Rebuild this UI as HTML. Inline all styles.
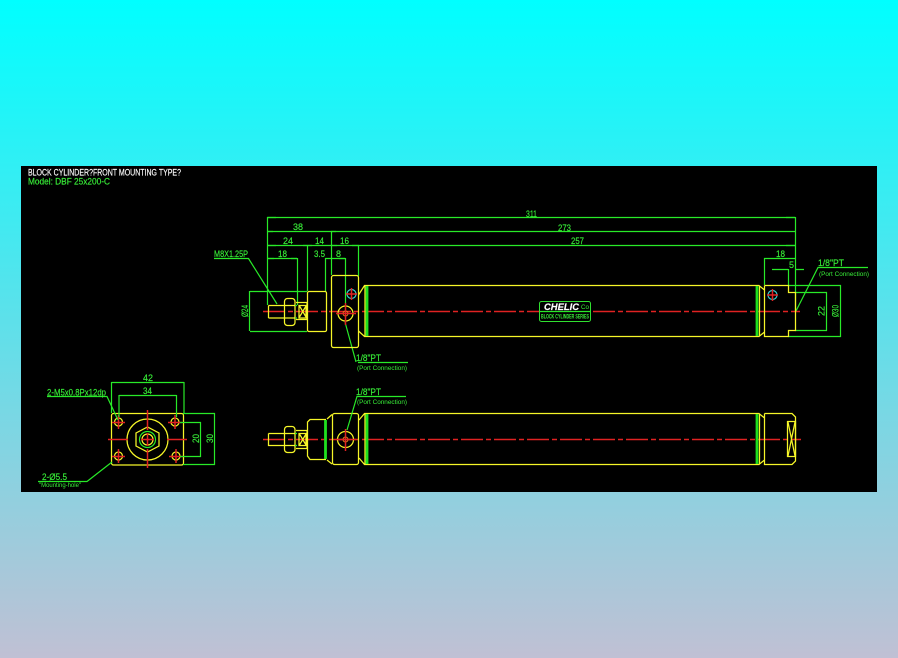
<!DOCTYPE html>
<html><head><meta charset="utf-8"><title>Block Cylinder</title>
<style>
html,body{margin:0;padding:0;width:898px;height:658px;overflow:hidden;background:linear-gradient(180deg,#00ffff 0,#c0c0d4 100%)}
svg{position:absolute;left:0;top:0}
text{font-family:"Liberation Sans",sans-serif;font-size:9px;fill:#38ee38;stroke:#38ee38;stroke-width:.15}
.y{stroke:#f6f628;fill:none;stroke-width:1.25}
.g{stroke:#28ea28;fill:none;stroke-width:1.2}
.b{stroke:#1fe01f;fill:none;stroke-width:2.8}
.r{stroke:#e02222;fill:none;stroke-width:1.5}
.c{stroke:#35d0d0;fill:none;stroke-width:1.2}
.s{font-size:6.5px;stroke-width:0}
</style></head><body>
<svg width="898" height="658" viewBox="0 0 898 658" xmlns="http://www.w3.org/2000/svg">
<rect x="21" y="166" width="856" height="326" fill="#000"/>
<text x="28" y="175.5" style="fill:#fff;stroke:#fff" textLength="153" lengthAdjust="spacingAndGlyphs">BLOCK CYLINDER?FRONT MOUNTING TYPE?</text>
<text x="28" y="184.5" textLength="82" lengthAdjust="spacingAndGlyphs">Model: DBF 25x200-C</text>

<!-- centre lines -->
<path class="r" stroke-dasharray="22 3 5 3" d="M263 311.5H800M263 439.5H801"/>

<!-- dimension lines, top view -->
<path class="g" d="M267.5 217.5H795.5M267.5 231.5H795.5M267.5 245.5H795.5M268 258.5H297M325 258.5H345.5M764 258.5H795M772 269.5H788M795 269.5H804
M267.5 217V305M307.5 245V291M331.5 231V275M358.5 245V276M297.5 258V305M325.5 258V291M345.5 258V304M764.5 258V285M788.5 269V285M795.5 217V311
M214 258.5H248.5L277 304M250 291.5H307M250 331.5H307M249.5 291V331
M796 311L818 267.5H868M358 362.5H408M345 322L356 362
M788 285.5H841M795 292.5H827M795 330.5H827M788 336.5H841M826.5 292V331M840.5 285V337"/>
<path class="g" stroke-width="2" d="M267 217.5h9M786 217.5h9M267 231.5h6M331 231.5h5M267 245.5h9M303 245.5h9M331 245.5h6M352 245.5h7M786 245.5h9M268 258.5h6M291 258.5h6M339 258.5h6"/>
<text x="526" y="217" textLength="11" lengthAdjust="spacingAndGlyphs">311</text>
<text x="558" y="231" textLength="13" lengthAdjust="spacingAndGlyphs">273</text>
<text x="571" y="244" textLength="13" lengthAdjust="spacingAndGlyphs">257</text>
<text x="293" y="230" textLength="10" lengthAdjust="spacingAndGlyphs">38</text>
<text x="283" y="244" textLength="10" lengthAdjust="spacingAndGlyphs">24</text>
<text x="315" y="244" textLength="9" lengthAdjust="spacingAndGlyphs">14</text>
<text x="340" y="244" textLength="9" lengthAdjust="spacingAndGlyphs">16</text>
<text x="278" y="257" textLength="9" lengthAdjust="spacingAndGlyphs">18</text>
<text x="314" y="257" textLength="11" lengthAdjust="spacingAndGlyphs">3.5</text>
<text x="336" y="257">8</text>
<text x="214" y="257" textLength="34" lengthAdjust="spacingAndGlyphs">M8X1.25P</text>
<text x="776" y="257" textLength="9" lengthAdjust="spacingAndGlyphs">18</text>
<text x="789" y="268">5</text>
<text x="818" y="266" textLength="26" lengthAdjust="spacingAndGlyphs">1/8"PT</text>
<text class="s" x="819" y="276" textLength="50" lengthAdjust="spacingAndGlyphs">(Port Connection)</text>
<text x="356" y="361" textLength="25" lengthAdjust="spacingAndGlyphs">1/8"PT</text>
<text class="s" x="357" y="370" textLength="50" lengthAdjust="spacingAndGlyphs">(Port Connection)</text>
<text transform="translate(248 317) rotate(-90)" textLength="12" lengthAdjust="spacingAndGlyphs">Ø24</text>
<text transform="translate(824.5 316) rotate(-90)" textLength="10" lengthAdjust="spacingAndGlyphs">22</text>
<text transform="translate(838.5 317) rotate(-90)" textLength="12" lengthAdjust="spacingAndGlyphs">Ø30</text>

<!-- top view cylinder -->
<path class="y" d="M268.5 305.5H285M268.5 305.5V318M268.5 318H285"/>
<rect class="y" x="284.5" y="298.5" width="10.5" height="27" rx="3"/>
<path class="y" d="M285 305.5H295M285 318H295"/>
<path class="y" d="M296 302.5H307V319.5H296M299 305.5H306V318H299ZM299.5 306L306 317M306 306L299.5 317"/>
<rect class="y" x="307.5" y="291.5" width="19" height="40" rx="1.5"/>
<rect class="y" x="331.5" y="275.5" width="27" height="72" rx="2"/>
<circle class="y" cx="345.5" cy="313.5" r="7.5" stroke-width="1.6"/>
<circle cx="345.5" cy="313.5" r="2.5" fill="none" stroke="#e88b1a"/>
<path class="r" d="M345.5 303V325M336 313.5H356"/>
<circle class="c" cx="351.5" cy="294" r="4.5"/>
<path class="r" d="M351.5 288V300M346 294H357"/>
<path class="y" d="M358.5 295L364.5 285.5H759L764.5 290M764.5 285.5H788.5V292.5H795.5V330.5H788.5V336.5H764.5V285.5M764.5 332L759 336.5H364.5L358.5 331M365 286V336"/>
<path class="b" d="M367 286V336M757 286V336"/>
<path class="y" d="M759.5 286V336"/>
<circle class="c" cx="772.5" cy="295" r="4.5"/>
<path class="r" d="M772.5 289V301M767 295H778"/>

<!-- logo -->
<rect x="539.5" y="301.5" width="51" height="20" rx="2" fill="#000" stroke="#30e030"/>
<path class="g" d="M540 311.5H590"/>
<text x="544" y="310" style="fill:#fff;stroke:#fff;font-style:italic;font-weight:bold" textLength="35" lengthAdjust="spacingAndGlyphs">CHELIC</text>
<text x="581" y="309" style="font-size:6px;stroke-width:0" textLength="8" lengthAdjust="spacingAndGlyphs">Co</text>
<text x="541" y="318.5" style="font-size:6px;font-weight:bold;stroke-width:0" textLength="48" lengthAdjust="spacingAndGlyphs">BLOCK CYLINDER SERIES</text>

<!-- bottom view cylinder -->
<path class="y" d="M268.5 433.5H285M268.5 433.5V445.5H285"/>
<rect class="y" x="284.5" y="426.5" width="10.5" height="26" rx="3"/>
<path class="y" d="M285 433.5H295M285 445.5H295"/>
<path class="y" d="M296 430.5H307V448.5H296M299 433.5H306V445.5H299ZM299.5 434L306 445M306 434L299.5 445"/>
<path class="g" stroke-width="3" d="M295 433.5h2M295 445.5h2M295 305.5h2M295 318h2"/>
<path class="y" d="M326 419.5H310L307.5 422V456L310 459.5H326"/>
<path class="b" d="M325.5 420V459"/>
<path class="y" d="M327 419L332 414.5M327 460L332 464"/>
<rect class="y" x="332.5" y="413.5" width="26" height="51" rx="2"/>
<path class="y" d="M359 420L364.5 413.5H759L764.5 418M764.5 413.5H792L795.5 417V461L792 464.5H764.5V413.5M764.5 460L759 464.5H364.5L359 458M365 414V464"/>
<path class="b" d="M367 414V464M757 414V464"/>
<path class="y" d="M759.5 414V464M787.5 421.5H795.5V456.5H787.5ZM788 422L795 456M795 422L788 456"/>
<circle class="y" cx="345.5" cy="439.5" r="8" stroke-width="1.6"/>
<circle cx="345.5" cy="439.5" r="2.5" fill="none" stroke="#e88b1a"/>
<path class="r" d="M345.5 429V451M336 439.5H356"/>
<path class="g" d="M347 430L357 396.5H406"/>
<text x="356" y="395" textLength="25" lengthAdjust="spacingAndGlyphs">1/8"PT</text>
<text class="s" x="357" y="404" textLength="50" lengthAdjust="spacingAndGlyphs">(Port Connection)</text>

<!-- end view -->
<rect class="y" x="111.5" y="413.5" width="72" height="51.5" rx="2"/>
<circle class="y" cx="147.5" cy="439.5" r="20.5" stroke-width="1.8"/>
<path class="y" d="M136 433L147.5 427L159 433V446L147.5 452L136 446Z"/>
<circle class="g" cx="147.5" cy="439.5" r="8" stroke-width="1.5"/>
<circle class="y" cx="147.5" cy="439.5" r="5.5"/>
<circle class="y" cx="118.5" cy="422" r="4"/>
<circle class="y" cx="175" cy="422" r="4"/>
<circle class="y" cx="118.5" cy="456" r="4"/>
<circle class="y" cx="176" cy="456" r="4"/>
<path class="r" d="M147.5 410V430M147.5 449V468M108 439.5H128M167 439.5H187M118.5 415V429M112 422.5H125M175 415V429M168 422.5H182M118.5 449V463M112 456.5H125M176 449V463M169 456.5H183"/>
<path class="r" d="M141 439.5h13M147.5 433v13"/>
<path class="g" d="M111.5 382.5H184M111.5 382V413M184 382V413M119 395.5H176.5M119 395V417M176.5 395V417
M183 413.5H215M180 422.5H201M180 456.5H201M200.5 422V457M214.5 413V465M183 464.5H215
M47 396.5H107L118 420M38 481.5H87L112 462"/>
<text x="143" y="381" textLength="10" lengthAdjust="spacingAndGlyphs">42</text>
<text x="143" y="394" textLength="9" lengthAdjust="spacingAndGlyphs">34</text>
<text x="47" y="395.5" textLength="59" lengthAdjust="spacingAndGlyphs">2-M5x0.8Px12dp</text>
<text x="42" y="480" textLength="25" lengthAdjust="spacingAndGlyphs">2-Ø5.5</text>
<text class="s" x="39" y="487" textLength="42" lengthAdjust="spacingAndGlyphs">"Mounting-hole"</text>
<text transform="translate(199 443) rotate(-90)" textLength="9" lengthAdjust="spacingAndGlyphs">20</text>
<text transform="translate(213 443) rotate(-90)" textLength="9" lengthAdjust="spacingAndGlyphs">30</text>
</svg>
</body></html>
